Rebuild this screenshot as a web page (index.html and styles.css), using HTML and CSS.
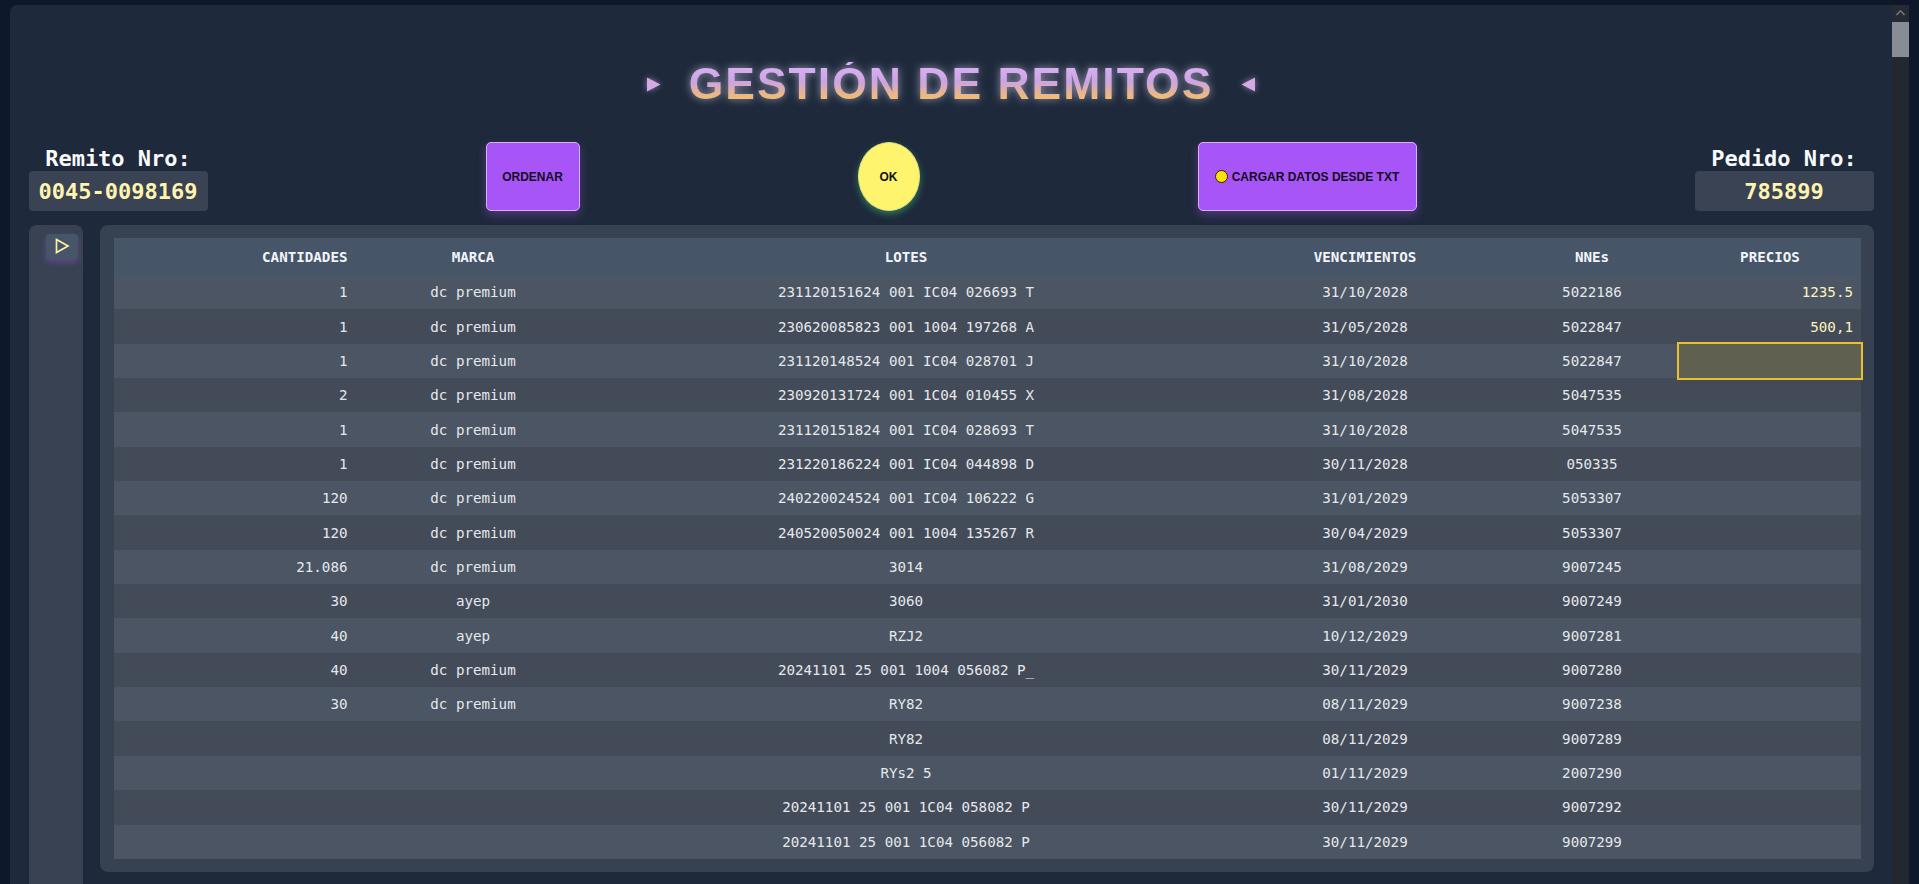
FILE: index.html
```html
<!DOCTYPE html>
<html lang="es">
<head>
<meta charset="utf-8">
<title>Gestión de Remitos</title>
<link rel="stylesheet" href="styles.css">
</head>
<body>
<div class="app">
  <main class="app-main">
    <h1 class="title">
      <svg class="tri" viewBox="0 0 15 15" width="15" height="15"><polygon points="1,0.5 14.5,7.5 1,14.5"/></svg>
      <span class="title-text">GESTIÓN DE REMITOS</span>
      <svg class="tri" viewBox="0 0 15 15" width="15" height="15"><polygon points="14,0.5 0.5,7.5 14,14.5"/></svg>
    </h1>

    <div class="toolbar">
      <div class="field">
        <span class="field-label">Remito Nro:</span>
        <div class="field-value">0045-0098169</div>
      </div>
      <button class="btn btn-purple btn-order">ORDENAR</button>
      <button class="btn btn-ok">OK</button>
      <button class="btn btn-purple btn-load"><span class="dot"></span>CARGAR DATOS DESDE TXT</button>
      <div class="field">
        <span class="field-label">Pedido Nro:</span>
        <div class="field-value">785899</div>
      </div>
    </div>

    <div class="workspace">
      <aside class="sidebar">
        <button class="side-btn" aria-label="Expandir">
          <svg viewBox="0 0 16 16" width="16" height="16"><polygon points="2.5,1.5 14,8 2.5,14.5" fill="none" stroke="#fdf2a0" stroke-width="1.7" stroke-linejoin="miter"/></svg>
        </button>
      </aside>
      <section class="card">
        <table class="grid">
          <colgroup>
            <col class="c-cant"><col class="c-marca"><col class="c-lote"><col class="c-venc"><col class="c-nne"><col class="c-precio">
          </colgroup>
          <thead>
            <tr><th class="num">CANTIDADES</th><th>MARCA</th><th>LOTES</th><th>VENCIMIENTOS</th><th>NNEs</th><th>PRECIOS</th></tr>
          </thead>
          <tbody>
            <tr><td class="num">1</td><td>dc premium</td><td>231120151624 001 IC04 026693 T</td><td>31/10/2028</td><td>5022186</td><td class="price">1235.5</td></tr>
            <tr><td class="num">1</td><td>dc premium</td><td>230620085823 001 1004 197268 A</td><td>31/05/2028</td><td>5022847</td><td class="price">500,1</td></tr>
            <tr><td class="num">1</td><td>dc premium</td><td>231120148524 001 IC04 028701 J</td><td>31/10/2028</td><td>5022847</td><td class="price editing"></td></tr>
            <tr><td class="num">2</td><td>dc premium</td><td>230920131724 001 1C04 010455 X</td><td>31/08/2028</td><td>5047535</td><td class="price"></td></tr>
            <tr><td class="num">1</td><td>dc premium</td><td>231120151824 001 IC04 028693 T</td><td>31/10/2028</td><td>5047535</td><td class="price"></td></tr>
            <tr><td class="num">1</td><td>dc premium</td><td>231220186224 001 IC04 044898 D</td><td>30/11/2028</td><td>050335</td><td class="price"></td></tr>
            <tr><td class="num">120</td><td>dc premium</td><td>240220024524 001 IC04 106222 G</td><td>31/01/2029</td><td>5053307</td><td class="price"></td></tr>
            <tr><td class="num">120</td><td>dc premium</td><td>240520050024 001 1004 135267 R</td><td>30/04/2029</td><td>5053307</td><td class="price"></td></tr>
            <tr><td class="num">21.086</td><td>dc premium</td><td>3014</td><td>31/08/2029</td><td>9007245</td><td class="price"></td></tr>
            <tr><td class="num">30</td><td>ayep</td><td>3060</td><td>31/01/2030</td><td>9007249</td><td class="price"></td></tr>
            <tr><td class="num">40</td><td>ayep</td><td>RZJ2</td><td>10/12/2029</td><td>9007281</td><td class="price"></td></tr>
            <tr><td class="num">40</td><td>dc premium</td><td>20241101 25 001 1004 056082 P_</td><td>30/11/2029</td><td>9007280</td><td class="price"></td></tr>
            <tr><td class="num">30</td><td>dc premium</td><td>RY82</td><td>08/11/2029</td><td>9007238</td><td class="price"></td></tr>
            <tr><td class="num"></td><td></td><td>RY82</td><td>08/11/2029</td><td>9007289</td><td class="price"></td></tr>
            <tr><td class="num"></td><td></td><td>RYs2 5</td><td>01/11/2029</td><td>2007290</td><td class="price"></td></tr>
            <tr><td class="num"></td><td></td><td>20241101 25 001 1C04 058082 P</td><td>30/11/2029</td><td>9007292</td><td class="price"></td></tr>
            <tr><td class="num"></td><td></td><td>20241101 25 001 1C04 056082 P</td><td>30/11/2029</td><td>9007299</td><td class="price"></td></tr>
          </tbody>
        </table>
      </section>
    </div>
  </main>

  <div class="scrollbar" aria-hidden="true">
    <div class="scroll-up">
      <svg viewBox="0 0 17 17" width="17" height="17"><path d="M4.5 10 L8.5 5.8 L12.5 10" fill="none" stroke="#737881" stroke-width="1.6"/></svg>
    </div>
    <div class="scroll-thumb"></div>
  </div>
</div>
</body>
</html>
```
FILE: styles.css
```css
html, body {
  margin: 0;
  height: 100%;
  overflow: hidden;
}
body {
  background: #0f172a;
  padding: 5px 10px 0;
  box-sizing: border-box;
  font-family: "DejaVu Sans Mono", "Liberation Mono", monospace;
  color: #e5e7eb;
}

.app {
  height: 1000px;
  display: flex;
  background: #1e293b;
  border-radius: 7px 0 0 0;
  overflow: hidden;
}
.app-main {
  flex: 1;
  min-width: 0;
  padding: 53px 18.5px 0;
  overflow: hidden;
}

/* Scrollbar rail */
.scrollbar {
  width: 17px;
  flex: none;
  background: #23272f;
  display: flex;
  flex-direction: column;
}
.scroll-up {
  height: 17px;
  background: #262a32;
}
.scroll-up svg { display: block; }
.scroll-thumb {
  height: 35px;
  background: #878c95;
}

/* Title */
.title {
  margin: 0;
  height: 53px;
  display: flex;
  align-items: center;
  justify-content: center;
  gap: 28px;
}
.tri {
  display: block;
  fill: #d5a9e6;
  filter: drop-shadow(0 0 3px rgba(230, 200, 255, 0.55));
}
.title-text {
  display: inline-block;
  font-family: "Liberation Sans", Arial, sans-serif;
  font-weight: 700;
  font-size: 44.5px;
  line-height: 1;
  letter-spacing: 2px;
  background: linear-gradient(180deg, #d8b0f4 10%, #cda4e2 44%, #e0b0a6 62%, #efbb76 78%);
  -webkit-background-clip: text;
  background-clip: text;
  color: transparent;
  filter: drop-shadow(0 0 4px rgba(235, 225, 255, 0.6));
}

/* Toolbar */
.toolbar {
  margin-top: 31px;
  display: flex;
  justify-content: space-between;
  align-items: flex-end;
}
.field {
  display: flex;
  flex-direction: column;
  align-items: center;
}
.field-label {
  font-weight: 700;
  font-size: 22px;
  line-height: 24px;
  color: #f8fafc;
}
.field-value {
  width: 179px;
  height: 40px;
  box-sizing: border-box;
  background: #394353;
  border-radius: 4px;
  display: flex;
  align-items: center;
  justify-content: center;
  font-weight: 700;
  font-size: 22px;
  color: #fff4b0;
}

.btn {
  height: 69px;
  box-sizing: border-box;
  font-family: "Liberation Sans", Arial, sans-serif;
  font-weight: 700;
  font-size: 12px;
  color: #140a1e;
  cursor: pointer;
  display: flex;
  align-items: center;
  justify-content: center;
  padding: 0;
}
.btn-purple {
  background: #a855f7;
  border: 1px solid #d3b0f7;
  border-radius: 5px;
  box-shadow: 0 4px 10px rgba(168, 85, 247, 0.35);
}
.btn-order { width: 94px; }
.btn-load { width: 219px; gap: 4px; }
.dot {
  width: 13px;
  height: 13px;
  box-sizing: border-box;
  border-radius: 50%;
  background: #ffe100;
  border: 1px solid #2a2200;
}
.btn-ok {
  width: 62px;
  background: #fff46e;
  border: 1px solid #e3df80;
  border-radius: 50%;
  color: #111;
  box-shadow: 0 3px 7px rgba(74, 222, 128, 0.45);
}

/* Workspace */
.workspace {
  margin-top: 14px;
  display: flex;
  align-items: flex-start;
  gap: 17px;
}
.sidebar {
  width: 54.5px;
  flex: none;
  height: 760px;
  background: #384252;
  border-radius: 8px 8px 0 0;
  box-sizing: border-box;
  padding: 8.5px 5px 0 17.5px;
}
.side-btn {
  width: 32px;
  height: 25.5px;
  padding: 0;
  border: 0;
  border-radius: 4px;
  background: #475569;
  box-shadow: 0 3px 6px rgba(168, 85, 247, 0.35);
  display: flex;
  align-items: center;
  justify-content: center;
}
.side-btn svg { display: block; }

.card {
  flex: 1;
  background: #374151;
  border-radius: 8px;
  padding: 13px 12.5px 13px 14px;
}

.grid {
  width: 100%;
  table-layout: fixed;
  border-collapse: collapse;
  font-size: 14.2px;
}
.c-cant { width: 245px; }
.c-marca { width: 228px; }
.c-lote { width: 638px; }
.c-venc { width: 280px; }
.c-nne { width: 174px; }
.c-precio { width: 182px; }

.grid th {
  height: 37px;
  padding: 0 8px;
  background: #475569;
  color: #f1f5f9;
  font-weight: 700;
  text-align: center;
  white-space: nowrap;
}
.grid td {
  height: 34.35px;
  padding: 0 8px;
  text-align: center;
  white-space: nowrap;
  color: #e5e7eb;
}
.grid th.num, .grid td.num { text-align: right; padding-right: 11.5px; }
.grid td.price { text-align: right; color: #fbf3bd; }
.grid tbody tr:nth-child(odd) { background: #4b5563; }
.grid tbody tr:nth-child(even) { background: #434b59; }
.grid td.editing {
  background: #5f604f;
  outline: 2px solid #e9c22a;
  outline-offset: 0;
}
```
